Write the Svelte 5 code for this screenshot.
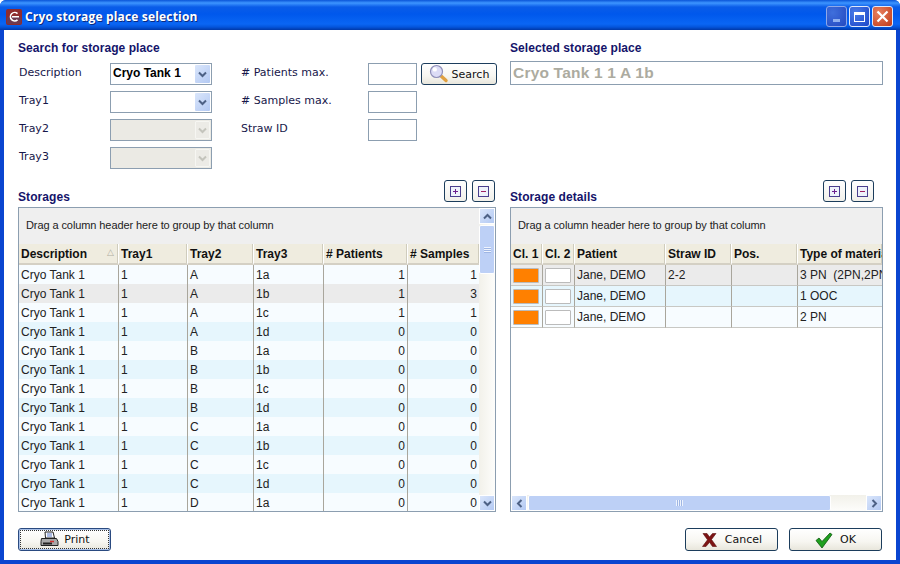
<script>
  const trays = [
    ["A", "1a", 1, 1], ["A", "1b", 1, 3], ["A", "1c", 1, 1], ["A", "1d", 0, 0],
    ["B", "1a", 0, 0], ["B", "1b", 0, 0], ["B", "1c", 0, 0], ["B", "1d", 0, 0],
    ["C", "1a", 0, 0], ["C", "1b", 0, 0], ["C", "1c", 0, 0], ["C", "1d", 0, 0],
    ["D", "1a", 0, 0],
  ];
  const details = [
    { straw: "2-2", type: "3 PN  (2PN,2PN,2PN)" },
    { straw: "", type: "1 OOC" },
    { straw: "", type: "2 PN" },
  ];
</script>

{#snippet chevron(dir, color)}
  <svg width="9" height="7" viewBox="0 0 9 7" class:up={dir === "up"} class:left={dir === "left"} class:right={dir === "right"}>
    <path d="M1 1.500 L4.500 5 L8 1.500" fill="none" stroke={color} stroke-width="2" />
  </svg>
{/snippet}

{#snippet combo(value, disabled)}
  <div class="combo" class:off={disabled}>
    <span class="combo-value">{value}</span>
    <span class="combo-btn">{@render chevron("down", disabled ? "#c4c4bc" : "#4d6185")}</span>
  </div>
{/snippet}

{#snippet treeBtns()}
  <div class="tree-btns">
    <button class="tree-btn">
      <svg width="11" height="11" viewBox="0 0 11 11"><rect x=".5" y=".5" width="10" height="10" fill="#eef2fb" stroke="#4a3f8e" /><path d="M3 5.500h5M5.500 3v5" stroke="#6d1f8e" /></svg>
    </button>
    <button class="tree-btn">
      <svg width="11" height="11" viewBox="0 0 11 11"><rect x=".5" y=".5" width="10" height="10" fill="#eef2fb" stroke="#4a3f8e" /><path d="M3 5.500h5" stroke="#a02060" /></svg>
    </button>
  </div>
{/snippet}

<div class="window">
  <header class="titlebar">
    <svg class="app-icon" width="16" height="16" viewBox="0 0 16 16">
      <rect width="16" height="16" rx="2" fill="#8e2b2e" />
      <rect x="1" y="8" width="14" height="7" rx="1" fill="#6d3a50" />
      <path d="M11.500 4.600 A4.200 4.200 0 1 0 11.500 10.800" fill="none" stroke="#fff" stroke-width="1.600" />
      <path d="M6 7.700h7" stroke="#fff" stroke-width="1.500" />
    </svg>
    <span class="title">Cryo storage place selection</span>
    <div class="caption-btns">
      <span class="cap cap-min"><i></i></span>
      <span class="cap cap-max"><i></i></span>
      <span class="cap cap-close">
        <svg width="13" height="13" viewBox="0 0 13 13"><path d="M1.500 1.500l10 10M11.500 1.500l-10 10" stroke="#fff" stroke-width="2.200" /></svg>
      </span>
    </div>
  </header>

  <main class="body">
    <section class="top">
      <div class="search">
        <h2>Search for storage place</h2>
        <div class="search-grid">
          <label>Description</label>
          {@render combo("Cryo Tank 1", false)}
          <label class="second">&#35; Patients max.</label>
          <div class="field"></div>
          <button class="btn search-btn">
            <svg width="20" height="20" viewBox="0 0 20 20">
              <path d="M11.500 11.500l5.500 5" stroke="#e0a040" stroke-width="3.400" stroke-linecap="round" />
              <circle cx="7.500" cy="7.500" r="6" fill="#dcdcf6" stroke="#8f8fb8" stroke-width="1.200" />
              <circle cx="5.800" cy="5.400" r="2.200" fill="#fff" />
            </svg>
            Search
          </button>

          <label>Tray1</label>
          {@render combo("", false)}
          <label class="second">&#35; Samples max.</label>
          <div class="field"></div>
          <span></span>

          <label>Tray2</label>
          {@render combo("", true)}
          <label class="second">Straw ID</label>
          <div class="field"></div>
          <span></span>

          <label>Tray3</label>
          {@render combo("", true)}
        </div>
      </div>
      <div class="selected">
        <h2>Selected storage place</h2>
        <div class="selected-field">Cryo Tank 1 1 A 1b</div>
      </div>
    </section>

    <section class="tables">
      <div class="pane pane-left">
        <div class="pane-head">
          <h2>Storages</h2>
          {@render treeBtns()}
        </div>
        <div class="grid-box left-box">
          <div class="grid-main">
            <div class="group-band">Drag a column header here to group by that column</div>
            <table>
              <colgroup>
                <col style="width:100px" /><col style="width:69px" /><col style="width:66px" />
                <col style="width:70px" /><col style="width:84px" /><col style="width:71px" />
              </colgroup>
              <thead>
                <tr>
                  <th>Description<span class="sort">△</span></th>
                  <th>Tray1</th><th>Tray2</th><th>Tray3</th><th># Patients</th><th># Samples</th>
                </tr>
              </thead>
              <tbody>
                {#each trays as t, i}
                  <tr class:alt={i % 2 === 1} class:sel={i === 1}>
                    <td>Cryo Tank 1</td><td>1</td><td>{t[0]}</td><td>{t[1]}</td>
                    <td class="num">{t[2]}</td><td class="num">{t[3]}</td>
                  </tr>
                {/each}
              </tbody>
            </table>
          </div>
          <div class="vscroll">
            <span class="sb-btn">{@render chevron("up", "#4d6185")}</span>
            <span class="v-thumb"><i></i></span>
            <span class="sb-fill"></span>
            <span class="sb-btn">{@render chevron("down", "#4d6185")}</span>
          </div>
        </div>
      </div>

      <div class="pane pane-right">
        <div class="pane-head">
          <h2>Storage details</h2>
          {@render treeBtns()}
        </div>
        <div class="grid-box right-box">
          <div class="group-band">Drag a column header here to group by that column</div>
          <table class="details">
            <colgroup>
              <col style="width:32px" /><col style="width:32px" /><col style="width:91px" />
              <col style="width:66px" /><col style="width:66px" /><col style="width:84px" />
            </colgroup>
            <thead>
              <tr><th>Cl. 1</th><th>Cl. 2</th><th>Patient</th><th>Straw ID</th><th>Pos.</th><th>Type of material</th></tr>
            </thead>
            <tbody>
              {#each details as d, i}
                <tr class:sel={i === 0} class:alt={i === 1}>
                  <td class="swatch-cell"><span class="swatch orange"></span></td>
                  <td class="swatch-cell"><span class="swatch"></span></td>
                  <td>Jane, DEMO</td><td>{d.straw}</td><td></td><td>{d.type}</td>
                </tr>
              {/each}
            </tbody>
          </table>
          <div class="spacer"></div>
          <div class="hscroll">
            <span class="sb-btn">{@render chevron("left", "#4d6185")}</span>
            <span class="h-thumb"><i></i></span>
            <span class="sb-fill"></span>
            <span class="sb-btn">{@render chevron("right", "#4d6185")}</span>
          </div>
        </div>
      </div>
    </section>

    <footer class="actions">
      <button class="btn print-btn">
        <span class="focus-ring">
          <svg width="20" height="17" viewBox="0 0 20 17">
            <path d="M6 1h8l1.500 6h-9z" fill="#fff" stroke="#222" />
            <path d="M8 3h5M8 5h5" stroke="#5a78c8" />
            <path d="M2.500 7.500h15l1.500 3v4h-17v-4z" fill="#a8a8a8" stroke="#222" />
            <path d="M4 12.500h9" stroke="#222" stroke-width="2" />
            <path d="M11 10.500h4" stroke="#d03030" stroke-width="1.500" />
          </svg>
          Print
        </span>
      </button>
      <div class="actions-right">
        <button class="btn dlg-btn">
          <svg width="17" height="16" viewBox="0 0 17 16"><path d="M2 1.500h4l2.500 3.500 3-3.500h3.500l-4.500 6 5 7h-4l-3-4.200-3.500 4.200h-3.500l5-6.700z" fill="#7d1414" stroke="#5a0d0d" stroke-width=".6" /></svg>
          Cancel
        </button>
        <button class="btn dlg-btn">
          <svg width="18" height="16" viewBox="0 0 18 16"><path d="M1 8.500l3-2.500 3 3.500 8-8.500 2 1.500-10 13.500z" fill="#1fa01f" stroke="#0b560b" stroke-width=".8" /></svg>
          OK
        </button>
      </div>
    </footer>
  </main>
</div>

<style>
  :global(body) {
    margin: 0;
    background: #fff;
  }

  .window {
    width: 900px;
    height: 564px;
    display: flex;
    flex-direction: column;
    box-sizing: border-box;
    font-family: "DejaVu Sans", sans-serif;
    font-size: 11px;
    color: #17174a;
    overflow: hidden;
    border-radius: 6px 6px 0 0;
    background: #0a45d0;
  }

  .titlebar {
    height: 30px;
    flex: none;
    display: flex;
    align-items: center;
    padding: 3px 4px 0 6px;
    box-sizing: border-box;
    background: linear-gradient(#0a55d8 0, #3d95ff 3px, #0a5ce8 7px, #0058ec 14px, #0a66f4 24px, #0455dc 27px, #0038a8 30px);
  }

  .app-icon {
    flex: none;
    margin-right: 3px;
  }

  .title {
    flex: 1;
    color: #fff;
    font-family: "Open Sans", sans-serif;
    font-weight: 700;
    font-size: 12px;
    letter-spacing: 0.17px;
    text-shadow: 1px 1px 0 #0a2a80;
  }

  .caption-btns {
    display: flex;
    gap: 2px;
    margin-right: 3px;
  }

  .cap {
    width: 21px;
    height: 21px;
    border: 1px solid #dfe8fb;
    border-radius: 3px;
    box-sizing: border-box;
    display: flex;
    align-items: center;
    justify-content: center;
    background: radial-gradient(circle at 30% 30%, #4a7ce8, #1c46c8);
  }

  .cap-min {
    background: radial-gradient(circle at 30% 30%, #3f6fdc, #2449c0);
    border-color: #8fa8e8;
    align-items: flex-end;
  }

  .cap-min i {
    width: 7px;
    height: 3px;
    background: #8fb0f0;
    margin-bottom: 4px;
  }

  .cap-max i {
    width: 11px;
    height: 10px;
    box-sizing: border-box;
    border: 1px solid #fff;
    border-top-width: 3px;
  }

  .cap-close {
    background: radial-gradient(circle at 30% 30%, #e88060, #c03a18);
  }

  .body {
    flex: 1;
    min-height: 0;
    margin: 0 4px 4px;
    padding: 11px 13px 0 14px;
    background: #fff;
    display: flex;
    flex-direction: column;
  }

  h2 {
    margin: 0;
    font-family: "Liberation Sans", sans-serif;
    font-size: 12px;
    font-weight: 700;
    letter-spacing: 0.07px;
    color: #14146a;
  }

  .top {
    height: 140px;
    flex: none;
    display: flex;
  }

  .search {
    width: 479px;
    flex: none;
  }

  .search-grid {
    display: grid;
    grid-template-columns: 92px 102px 156px 49px 80px;
    grid-auto-rows: 22px;
    row-gap: 6px;
    margin-top: 8px;
    align-items: center;
  }

  label {
    padding-left: 1px;
    height: 22px;
    line-height: 19px;
  }

  .second {
    padding-left: 29px;
  }

  .combo {
    height: 22px;
    box-sizing: border-box;
    border: 1px solid #8c9eb0;
    background: #fff;
    display: flex;
    align-items: center;
    justify-content: space-between;
    color: #000;
    font-family: "Liberation Sans", sans-serif;
    font-weight: 700;
    font-size: 12px;
  }

  .combo.off {
    background: #ebeae4;
  }

  .combo-value {
    padding: 0 0 2px 2px;
  }

  .combo-btn {
    width: 15px;
    height: 18px;
    margin-right: 1px;
    display: flex;
    align-items: center;
    justify-content: center;
    background: linear-gradient(135deg, #dae6fb, #b3c9f3);
    border-radius: 1px;
  }

  .off .combo-btn {
    background: #ecebe6;
    border: 1px solid #f6f6f2;
    box-sizing: border-box;
  }

  .up { transform: rotate(180deg); }
  .left { transform: rotate(90deg); }
  .right { transform: rotate(-90deg); }

  .field {
    width: 49px;
    height: 22px;
    box-sizing: border-box;
    border: 1px solid #8c9eb0;
    background: #fff;
  }

  .btn {
    font-family: "DejaVu Sans", sans-serif;
    font-size: 11px;
    color: #111;
    padding: 0;
    box-sizing: border-box;
    height: 22px;
    border: 1px solid #1c3d5c;
    border-radius: 3px;
    background: linear-gradient(#ffffff 0, #f7f6f1 60%, #e8e6dc 100%);
    display: flex;
    align-items: center;
    justify-content: center;
  }

  .search-btn {
    width: 76px;
    margin-left: 4px;
    gap: 3px;
  }

  .selected {
    flex: 1;
    margin-left: 13px;
  }

  .selected-field {
    margin-top: 6px;
    height: 24px;
    box-sizing: border-box;
    border: 1px solid #8c9eb0;
    padding-left: 2px;
    line-height: 21px;
    font-family: "Liberation Sans", sans-serif;
    font-size: 15.5px;
    font-weight: 700;
    letter-spacing: 0.2px;
    color: #acaba0;
  }

  .tables {
    flex: none;
    display: flex;
    justify-content: space-between;
  }

  .pane-left { width: 478px; }
  .pane-right { width: 373px; }

  .pane-head {
    height: 26px;
    display: flex;
    justify-content: space-between;
    align-items: flex-end;
  }

  .pane-head h2 {
    margin-bottom: 3px;
  }

  .tree-btns {
    display: flex;
    gap: 5px;
    margin-right: 1px;
    margin-bottom: 5px;
  }

  .pane-right .tree-btns {
    margin-right: 9px;
  }

  .tree-btn {
    width: 23px;
    height: 22px;
    padding: 0;
    border: 1px solid #1c3d5c;
    border-radius: 3px;
    background: linear-gradient(#fff, #f1f0ea);
    display: flex;
    align-items: center;
    justify-content: center;
  }

  .grid-box {
    height: 305px;
    box-sizing: border-box;
    border: 1px solid #8c9eb0;
    background: #fff;
    overflow: hidden;
  }

  .left-box {
    display: flex;
  }

  .right-box {
    display: flex;
    flex-direction: column;
  }

  .grid-main {
    width: 460px;
    flex: none;
  }

  .group-band {
    height: 36px;
    flex: none;
    box-sizing: border-box;
    padding: 11px 0 0 7px;
    background: #efefef;
    color: #222;
    font-family: "Liberation Sans", sans-serif;
    font-size: 11px;
    letter-spacing: -0.09px;
  }

  table {
    border-collapse: separate;
    border-spacing: 0;
    table-layout: fixed;
    width: 460px;
    font-family: "Liberation Sans", sans-serif;
    font-size: 12px;
    color: #222;
  }

  table.details {
    width: 371px;
  }

  th {
    height: 21px;
    padding: 0 0 0 2px;
    text-align: left;
    font-weight: 700;
    font-size: 12px;
    color: #111;
    background: #efecdf;
    box-sizing: border-box;
    border-bottom: 2px solid #d4d0c4;
    border-right: 1px solid #fff;
    box-shadow: inset -1px 0 0 #cfccbd;
    white-space: nowrap;
    overflow: hidden;
    position: relative;
  }

  .sort {
    position: absolute;
    right: 4px;
    top: 3px;
    font-size: 9px;
    font-weight: 400;
    color: #b0aea2;
  }

  td {
    height: 19px;
    padding: 0 2px;
    box-sizing: border-box;
    border-right: 1px solid #a9a69c;
    white-space: pre;
    overflow: hidden;
    background: #f7fcff;
  }

  td:last-child,
  th:last-child {
    border-right: none;
  }

  .num {
    text-align: right;
  }

  .alt td {
    background: #e6f6fd;
  }

  .sel td {
    background: #ebebeb;
  }

  .details td {
    height: 21px;
    border-bottom: 1px solid #c8c8c4;
  }

  .details .swatch-cell {
    padding: 0 3px 0 2px;
  }

  .swatch {
    display: block;
    height: 15px;
    box-sizing: border-box;
    border: 1px solid #bbb;
    background: #fff;
    border-radius: 1px;
  }

  .swatch.orange {
    background: #ff8000;
  }

  .vscroll {
    flex: 1;
    display: flex;
    flex-direction: column;
    background: linear-gradient(90deg, #f2f1ea, #fdfdfb);
  }

  .hscroll {
    height: 16px;
    flex: none;
    display: flex;
    background: linear-gradient(#f2f1ea, #fdfdfb);
  }

  .sb-btn {
    flex: none;
    width: 16px;
    height: 16px;
    display: flex;
    align-items: center;
    justify-content: center;
    border: 1px solid #fff;
    box-sizing: border-box;
    background: linear-gradient(135deg, #dae6fb, #b3c9f3);
  }

  .sb-fill {
    flex: 1;
  }

  .v-thumb,
  .h-thumb {
    display: flex;
    align-items: center;
    justify-content: center;
    box-sizing: border-box;
    border: 1px solid #fff;
    border-radius: 2px;
    background: #bdd0f6;
  }

  .v-thumb {
    height: 49px;
    margin-top: 1px;
  }

  .h-thumb {
    width: 303px;
    margin-left: 1px;
  }

  .v-thumb i {
    width: 7px;
    height: 6px;
    background: repeating-linear-gradient(#eef3fd 0 1px, #9fb6e4 1px 2px);
  }

  .h-thumb i {
    width: 7px;
    height: 6px;
    background: repeating-linear-gradient(90deg, #eef3fd 0 1px, #9fb6e4 1px 2px);
  }

  .spacer {
    flex: 1;
  }

  .actions {
    flex: 1;
    display: flex;
    justify-content: space-between;
    padding-top: 16px;
    padding-right: 1px;
  }

  .actions .btn {
    height: 23px;
  }

  .print-btn {
    width: 93px;
    border-color: #2a4a80;
    box-shadow: inset 0 0 0 1px #a8c0e8;
  }

  .focus-ring {
    width: 87px;
    height: 17px;
    border: 1px dotted #333;
    display: flex;
    align-items: center;
    justify-content: center;
    gap: 5px;
  }

  .actions-right {
    display: flex;
    gap: 11px;
  }

  .dlg-btn {
    width: 93px;
    gap: 7px;
  }
</style>
